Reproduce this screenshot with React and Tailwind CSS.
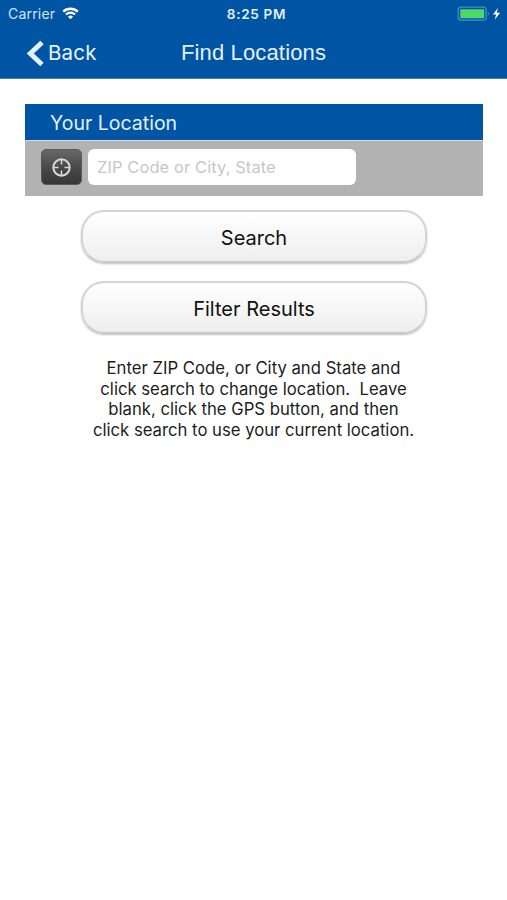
function Wifi() {
  return (
    <svg className="ml-[7px] h-[13px] w-[17px]" viewBox="0 0 17 13" fill="none" stroke="white">
      <path d="M1.2 4.6C5.2 .8 11.800 .8 15.800 4.600" strokeWidth="2.300" />
      <path d="M3.900 7.400C6.500 5 10.500 5 13.100 7.400" strokeWidth="2.100" />
      <path d="M8.500 12.300L5.900 9.700Q8.500 7.500 11.100 9.700Z" fill="white" stroke="none" />
    </svg>
  );
}

function StatusBar() {
  return (
    <div className="grid h-[26px] grid-cols-3 items-center pl-[8px] pr-[5px] pt-[1px]">
      <div className="flex items-center">
        <span className="text-[14px] leading-[18px] tracking-[0.2px] text-[#d5e5f5]">Carrier</span>
        <Wifi />
      </div>
      <span className="pl-[3px] text-center text-[13.500px] font-semibold leading-[18px] tracking-[0.700px] text-[#e4effa]">8:25 PM</span>
      <div className="flex items-center justify-end">
        <svg className="h-[16px] w-[45px]" viewBox="0 0 45 16">
          <rect x="1.200" y="1.200" width="28" height="13" rx="3.200" fill="none" stroke="#4e8cc4" strokeWidth="1.300" />
          <rect x="3.200" y="3.200" width="24" height="9" rx="1" fill="#4cd964" />
          <path d="M30.800 5.700Q33 7.700 30.800 9.700Z" fill="#4e8cc4" />
          <path d="M41 1.800L36 8.500H39.200L37.600 13.800L43.200 6.800H39.800Z" fill="white" />
        </svg>
      </div>
    </div>
  );
}

function GpsButton() {
  return (
    <button aria-label="GPS" className="flex h-[36px] w-[41px] items-center justify-center rounded-[5px] border border-[#5a5a5a] bg-linear-to-b from-[#686868] via-[#4a4a4a] to-[#363636]">
      <svg className="h-[22px] w-[22px]" viewBox="0 0 22 22" fill="none" stroke="#d8d8d8">
        <circle cx="10.500" cy="11.500" r="8.200" strokeWidth="2" />
        <path d="M10.500 4V8.500M10.500 14.500V19M3 11.500H7.500M13.500 11.500H18" strokeWidth="1.500" />
      </svg>
    </button>
  );
}

function PillButton({ children }) {
  return (
    <button className="h-[53px] w-[346px] rounded-[23px] border-2 border-[#d4d4d4] border-b-[#cacaca] bg-linear-to-b from-white to-[#eeeeee] pt-[2px] text-[20px] leading-[24px] text-[#111] shadow-[0_1px_2px_rgba(0,0,0,0.25)]">
      {children}
    </button>
  );
}

export default function App() {
  return (
    <main className="h-[900px] w-[507px] overflow-hidden bg-white font-['Inter',sans-serif]">
      <header className="h-[79px] border-b border-[#3f7fbc] bg-[#0054a4]">
        <StatusBar />
        <div className="grid h-[52px] grid-cols-[1fr_auto_1fr] items-center pt-[1px]">
          <button className="flex items-center pl-[26px] text-white">
            <svg className="mt-[1px] h-[27px] w-[19px]" viewBox="0 0 19 27" fill="none" stroke="#e4f1ff" strokeWidth="5">
              <path d="M16 2.500L4.300 13.500L16 24.500" />
            </svg>
            <span className="ml-[3px] text-[20.500px] leading-[26px] tracking-[0.200px] text-[#e8f2fc]">Back</span>
          </button>
          <h1 className="font-['Liberation_Sans',sans-serif] text-[22px] leading-[26px] tracking-[0.150px] text-[#e4effa]">Find Locations</h1>
        </div>
      </header>

      <section className="ml-[25px] mt-[25px] w-[458px]">
        <h2 className="h-[36px] bg-[#0054a4] pl-[25px] text-[19.500px] leading-[38px] text-[#e4effa]">Your Location</h2>
        <div className="flex h-[56px] items-start border-t border-[#d4dce4] bg-[#b2b2b2] pl-[16px] pt-[8px]">
          <GpsButton />
          <input
            className="ml-[6px] h-[36px] w-[268px] rounded-[6px] bg-white px-[9px] text-[16.500px] tracking-[0.080px] placeholder:text-[#c7c7c7] placeholder:opacity-100"
            placeholder="ZIP Code or City, State"
          />
        </div>
      </section>

      <section className="ml-[81px] mt-[14px] flex w-[346px] flex-col gap-[18px]">
        <PillButton>Search</PillButton>
        <PillButton>Filter Results</PillButton>
      </section>

      <p className="mt-[24px] whitespace-pre text-center text-[16.700px] leading-[20.500px] text-[#1c1c1c]">
        {"Enter ZIP Code, or City and State and\nclick search to change location.  Leave\nblank, click the GPS button, and then\nclick search to use your current location."}
      </p>
    </main>
  );
}
